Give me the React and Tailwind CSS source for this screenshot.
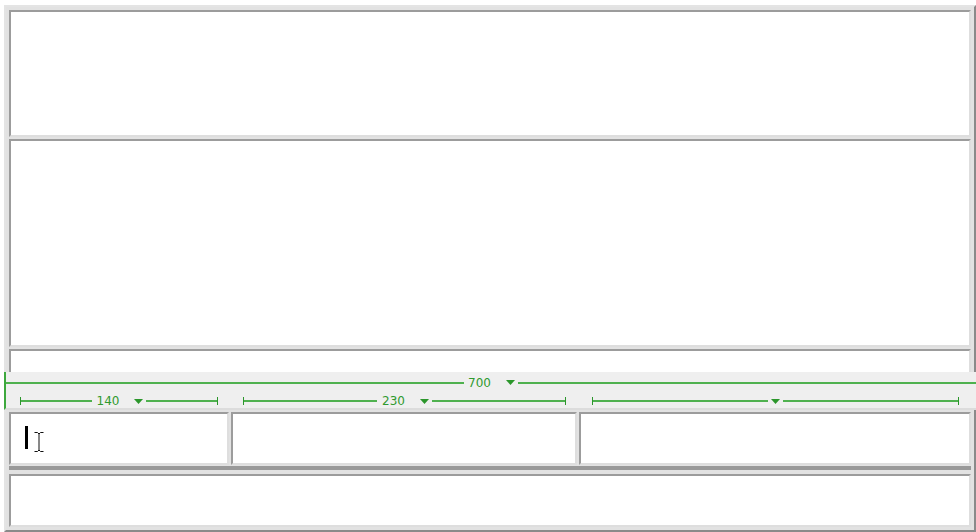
import React from "react";

// inset cell, like an old table cell with border="1"
const Cell = ({ className = "", children }) => (
  <div
    className={`bg-white border-2 border-t-[#9c9c9c] border-l-[#9c9c9c] border-b-[#dedede] border-r-[#dedede] ${className}`}
  >
    {children}
  </div>
);

const Arrow = () => (
  <svg width="9" height="5" viewBox="0 0 9 5" className="shrink-0">
    <path d="M0 0 H9 L4.5 5 Z" fill="#2b962b" />
  </svg>
);

const Tick = () => <div className="w-[1px] h-[8px] bg-[#2b962b] shrink-0" />;

const Line = () => <div className="flex-1 h-[2px] bg-[#4fb14f]" />;

const Label = ({ text, lead = "ml-[5px]" }) => (
  <>
    {text && (
      <span className={`${lead} text-[12px] leading-none text-[#2f9a2f] font-['DejaVu_Sans',sans-serif]`}>
        {text}
      </span>
    )}
    <span className={`${text ? "ml-[15px]" : "ml-[3px]"} mr-[3px] flex items-center`}>
      <Arrow />
    </span>
  </>
);

const Segment = ({ text, className = "" }) => (
  <div className={`flex items-center ${className}`}>
    <Tick />
    <Line />
    <Label text={text} />
    <Line />
    <Tick />
  </div>
);

const IBeam = () => (
  <svg width="12" height="22" viewBox="0 0 12 22" className="shrink-0">
    <path
      d="M1.5 1.5 H4.5 L6 3 L7.5 1.5 H10.5 M6 3 V19 M1.5 20.5 H4.5 L6 19 L7.5 20.5 H10.5"
      fill="none"
      stroke="#ffffff"
      strokeWidth="3"
    />
    <path
      d="M1.5 1.5 H4.5 L6 3 L7.5 1.5 H10.5 M6 3 V19 M1.5 20.5 H4.5 L6 19 L7.5 20.5 H10.5"
      fill="none"
      stroke="#111111"
      strokeWidth="1"
    />
  </svg>
);

export default function App() {
  return (
    <div className="relative w-[976px] h-[532px] bg-white pt-[5px] pl-[4px] overflow-hidden">
      {/* outer table */}
      <div className="w-[972px] h-[527px] border-2 border-t-[#e4e4e4] border-l-[#e4e4e4] border-b-[#8a8a8a] border-r-[#8a8a8a] bg-[#e2e2e2] p-[3px] flex flex-col gap-[2px]">
        <Cell className="h-[127px]" />
        <Cell className="h-[209px]" />
        <Cell className="h-[61px]" />

        {/* three column row */}
        <div className="h-[60px] flex flex-col">
          <div className="grid grid-cols-[220px_346px_1fr] gap-[2px] h-[53px]">
            <Cell className="flex items-start pl-[14px] pt-[12px]">
              <div className="w-[3px] h-[23px] bg-black" />
              <div className="ml-[5px] mt-[5px]">
                <IBeam />
              </div>
            </Cell>
            <Cell />
            <Cell />
          </div>
          <div className="mt-[1px] h-[4px] bg-[#999999]" />
        </div>

        <Cell className="h-[53px]" />
      </div>

      {/* table width visual aid */}
      <div className="absolute left-[4px] top-[372px] w-[972px] h-[38px] bg-[#efefef] border-l-2 border-l-[#3da83d] border-b-2 border-b-[#dcdcdc] flex flex-col">
        <div className="flex items-center mt-[9px] h-[3px]">
          <Line />
          <Label text="700" lead="ml-[4px]" />
          <Line />
        </div>
        <div className="grid grid-cols-[220px_346px_1fr] gap-[2px] pl-[3px] pr-[6px] mt-[11px]">
          <Segment text="140" className="pl-[11px] pr-[11px]" />
          <Segment text="230" className="pl-[12px] pr-[11px]" />
          <Segment className="pl-[13px] pr-[11px]" />
        </div>
      </div>
    </div>
  );
}
